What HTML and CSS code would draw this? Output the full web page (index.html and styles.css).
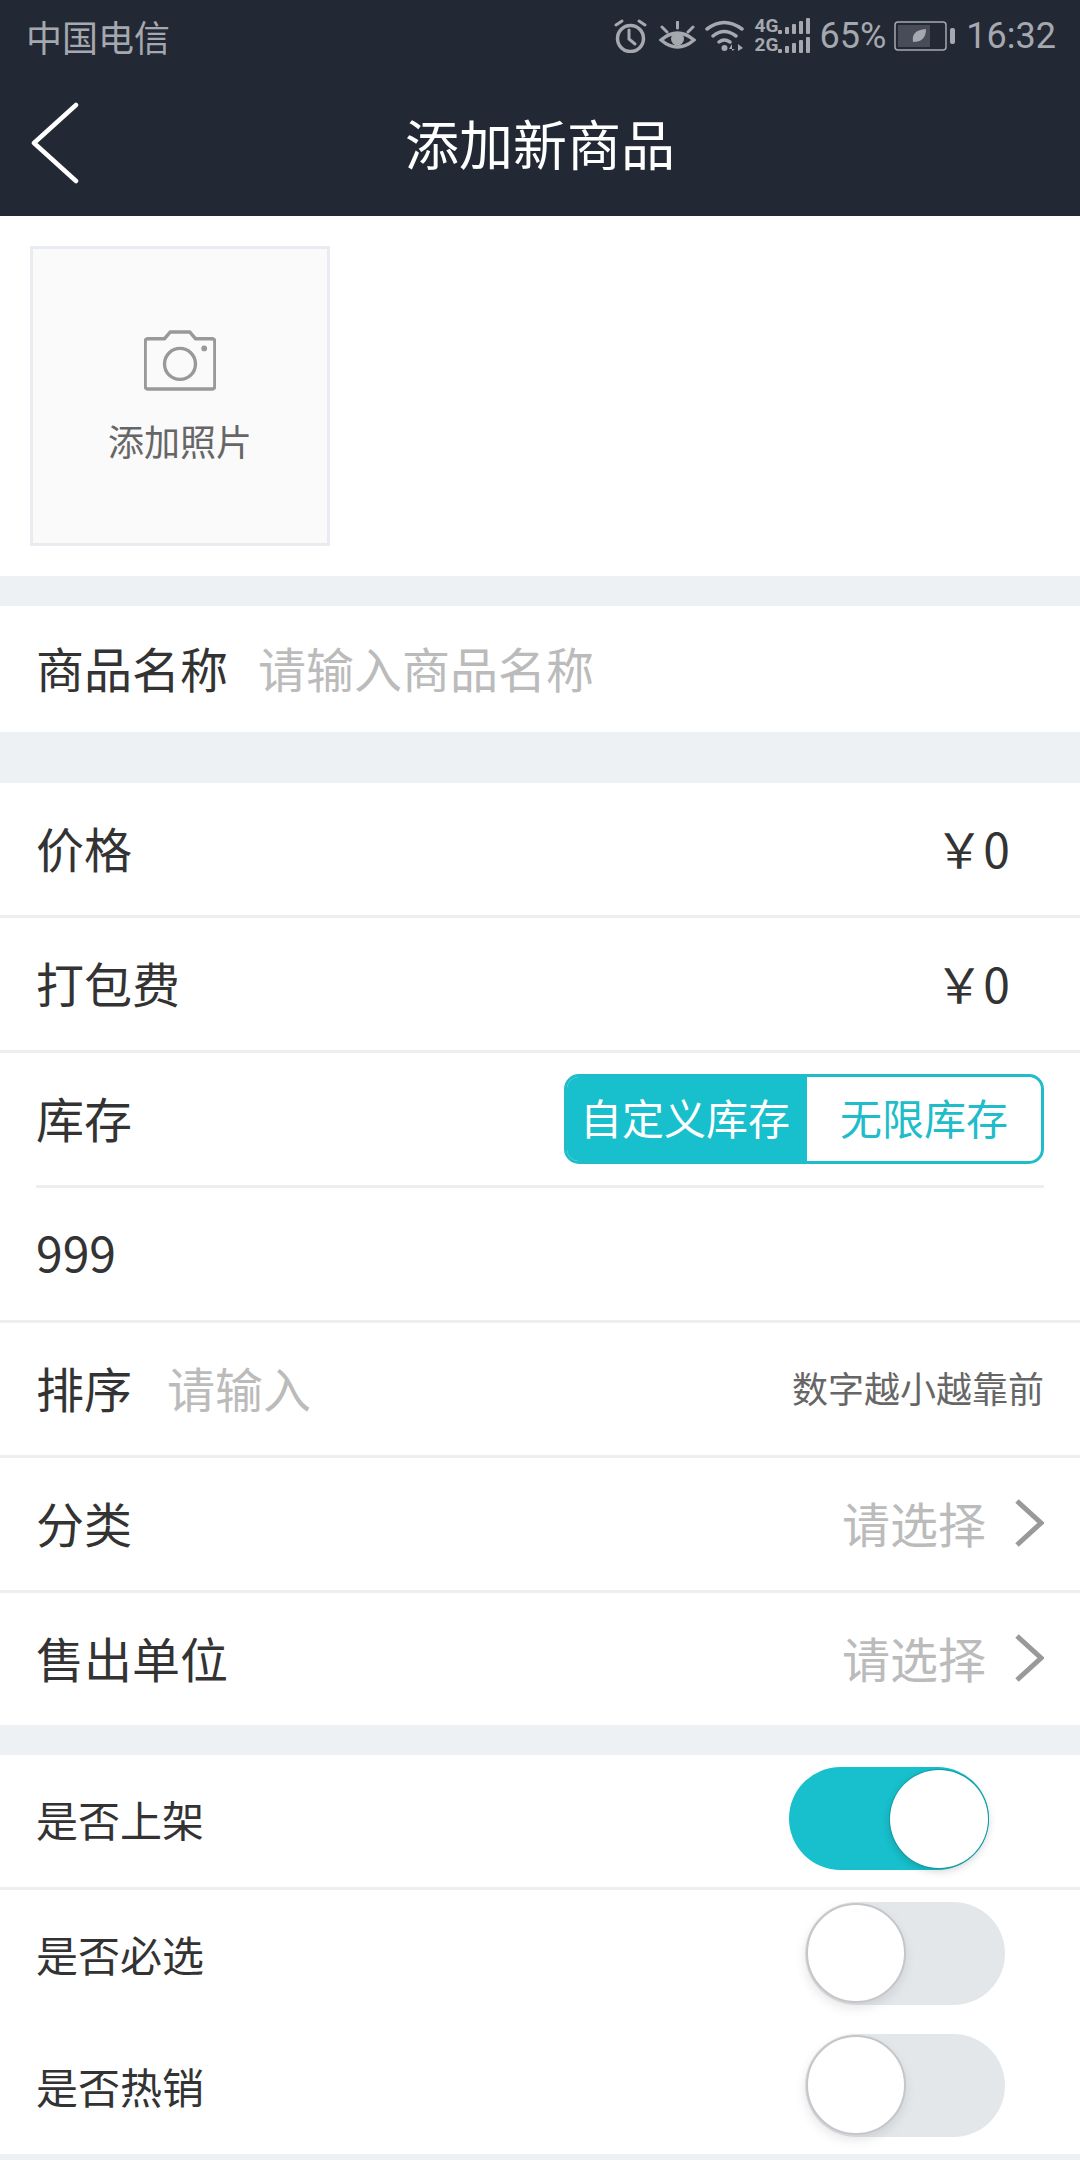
FILE: index.html
```html
<!DOCTYPE html>
<html lang="zh-CN">
<head>
  <meta charset="UTF-8" />
  <title>添加新商品</title>
  <link rel="stylesheet" href="styles.css">
</head>
<body>
  <div class="header">
    <div class="statusbar">
      <span class="carrier">中国电信</span>
      <div class="status-right">
        <svg class="ic-alarm" width="33" height="34" viewBox="0 0 33 34">
          <circle cx="16.5" cy="19.500" r="13" fill="none" stroke="#a5a8ae" stroke-width="3.500"/>
          <path d="M15 11v9l6 5" fill="none" stroke="#a5a8ae" stroke-width="3" stroke-linecap="round"/>
          <path d="M2 6l6-4M31 6l-6-4" fill="none" stroke="#a5a8ae" stroke-width="3" stroke-linecap="round"/>
        </svg>
        <svg class="ic-eye" width="37" height="31" viewBox="0 0 37 31">
          <path d="M2 19Q18.500 5 35 19Q18.500 33 2 19Z" fill="none" stroke="#a5a8ae" stroke-width="3.500"/>
          <circle cx="18.500" cy="18" r="6.500" fill="#a5a8ae"/>
          <path d="M18.500 1v6M3 6l5 5M34 6l-5 5" fill="none" stroke="#a5a8ae" stroke-width="3" stroke-linecap="round"/>
        </svg>
        <svg class="ic-wifi" width="40" height="32" viewBox="0 0 40 32">
          <path d="M2 9Q19-4 37 9M8 16Q19 7 31 16M14 22Q19 18 25 22" fill="none" stroke="#a5a8ae" stroke-width="3.500" stroke-linecap="round"/>
          <circle cx="19.500" cy="28" r="3" fill="#a5a8ae"/>
          <path d="M27 31v-7l-3 5h6M33 24l5 4-5 3z" fill="#a5a8ae"/>
        </svg>
        <div class="signal">
          <div class="signal-line">
            <span class="net">4G</span>
            <i class="b1"></i><i class="b2"></i><i class="b3"></i><i class="b4"></i><i class="b5"></i>
          </div>
          <div class="signal-line">
            <span class="net">2G</span>
            <i class="b1"></i><i class="b2"></i><i class="b3"></i><i class="b4"></i><i class="b5"></i>
          </div>
        </div>
        <span class="pct">65%</span>
        <svg class="ic-batt" width="62" height="30" viewBox="0 0 62 30">
          <rect x="1" y="1" width="51" height="28" rx="3" fill="none" stroke="#a5a8ae" stroke-width="1.500"/>
          <rect x="4" y="4" width="32" height="22" fill="#474c58"/>
          <path d="M19 21Q17 9 32 8Q32 21 19 21Z" fill="#a5a8ae"/>
          <rect x="56" y="7" width="5" height="16" rx="2" fill="#a5a8ae"/>
        </svg>
        <span class="clock">16:32</span>
      </div>
    </div>
    <div class="titlebar">
      <svg class="back" width="50" height="82" viewBox="0 0 50 82">
        <path d="M46 3L4 41l42 38" fill="none" stroke="#fff" stroke-width="4.500" stroke-linecap="round" stroke-linejoin="round"/>
      </svg>
      <h1>添加新商品</h1>
    </div>
  </div>

  <div class="photo-section">
    <div class="photo-box">
      <svg class="camera" width="72" height="61" viewBox="0 0 74 63">
        <path d="M4 9h17l6-7h20l6 7h17a3 3 0 0 1 3 3v46a3 3 0 0 1-3 3H4a3 3 0 0 1-3-3V12a3 3 0 0 1 3-3z" fill="none" stroke="#999" stroke-width="3.500"/>
        <circle cx="37" cy="35" r="16" fill="none" stroke="#999" stroke-width="3.500"/>
        <circle cx="62" cy="19" r="3" fill="#999"/>
      </svg>
      <span class="photo-label">添加照片</span>
    </div>
  </div>

  <div class="gap"></div>
  <div class="row name-row">
    <span class="label">商品名称</span>
    <span class="ph name-ph">请输入商品名称</span>
  </div>
  <div class="gap gap-big"></div>

  <div class="row line">
    <span class="label">价格</span>
    <span class="price">￥0</span>
  </div>
  <div class="row line">
    <span class="label">打包费</span>
    <span class="price">￥0</span>
  </div>

  <div class="stock line">
    <div class="stock-top">
      <span class="label">库存</span>
      <div class="seg">
        <span class="seg-on">自定义库存</span>
        <span class="seg-off">无限库存</span>
      </div>
    </div>
    <div class="stock-val">999</div>
  </div>

  <div class="row line">
    <span class="label">排序</span>
    <span class="ph sort-ph">请输入</span>
    <span class="hint">数字越小越靠前</span>
  </div>
  <div class="row line">
    <span class="label">分类</span>
    <span class="ph pick">请选择</span>
    <svg class="chev" width="30" height="50" viewBox="0 0 30 50"><path d="M3 3l24 22L3 47" fill="none" stroke="#999" stroke-width="5"/></svg>
  </div>
  <div class="row last-row">
    <span class="label">售出单位</span>
    <span class="ph pick">请选择</span>
    <svg class="chev" width="30" height="50" viewBox="0 0 30 50"><path d="M3 3l24 22L3 47" fill="none" stroke="#999" stroke-width="5"/></svg>
  </div>

  <div class="gap"></div>

  <div class="row small line">
    <span class="label-sm">是否上架</span>
    <div class="switch on"><div class="knob"></div></div>
  </div>
  <div class="row small">
    <span class="label-sm">是否必选</span>
    <div class="switch off"><div class="knob"></div></div>
  </div>
  <div class="row small">
    <span class="label-sm">是否热销</span>
    <div class="switch off"><div class="knob"></div></div>
  </div>
  <div class="gap"></div>
</body>
</html>
```

FILE: styles.css
```css
* { box-sizing: border-box; }
html, body { height: 2160px; overflow: hidden; }
body {
  margin: 0;
  background: #fff;
  color: #333;
  font-family: "Noto Sans CJK SC", "Noto Sans", sans-serif;
}

.header { height: 216px; background: #222834; }
.statusbar {
  height: 72px;
  padding: 0 24px 0 26px;
  display: flex;
  justify-content: space-between;
  align-items: center;
  color: #a5a8ae;
}
.carrier { font-size: 36px; line-height: 72px; }
.status-right { display: flex; align-items: center; }
.ic-eye { margin-left: 12px; }
.ic-wifi { margin-left: 9px; }
.signal { margin-left: 10px; width: 57px; }
.signal-line {
  display: flex;
  align-items: flex-end;
  gap: 3px;
  height: 17px;
  margin-bottom: 2px;
}
.signal-line i { display: block; width: 4px; background: #a5a8ae; border-radius: 1px; }
.signal-line .b1 { height: 4px; }
.signal-line .b2 { height: 7px; }
.signal-line .b3 { height: 10px; }
.signal-line .b4 { height: 13px; }
.signal-line .b5 { height: 16px; }
.net {
  width: 20px;
  font: bold 19px/17px "Liberation Sans Narrow", "Roboto", sans-serif;
}
.pct { margin-left: 8px; font: 36px/72px "Roboto", sans-serif; }
.ic-batt { margin-left: 8px; }
.clock { margin-left: 10px; font: 36px/72px "Roboto", sans-serif; }

.titlebar {
  position: relative;
  height: 144px;
  display: flex;
  justify-content: center;
  align-items: center;
  padding-bottom: 3px;
}
.titlebar h1 { margin: 0; font-size: 54px; font-weight: 400; color: #fff; }
.back { position: absolute; left: 30px; top: 30px; }

.photo-section { height: 360px; padding: 30px; }
.photo-box {
  width: 300px;
  height: 300px;
  background: #fafafa;
  border: 3px solid #e8ebef;
  display: flex;
  flex-direction: column;
  align-items: center;
  padding-top: 81px;
}
.photo-label { margin-top: 24px; font-size: 36px; line-height: 50px; color: #666; }

.gap { height: 30px; background: #eef1f4; }
.gap-big { height: 51px; }

.row {
  height: 135px;
  padding: 0 36px 5px;
  display: flex;
  align-items: center;
}
.line { border-bottom: 3px solid #eee; }
.name-row { height: 126px; }
.last-row { height: 132px; }
.label { font-size: 48px; }
.ph { font-size: 48px; color: #bbb; }
.name-ph { margin-left: 30px; }
.sort-ph { margin-left: 35px; }
.price { margin-left: auto; margin-right: 34px; font-size: 48px; }
.hint { margin-left: auto; font-size: 36px; color: #666; }
.pick { margin-left: auto; }
.chev { margin-left: 28px; margin-top: 3px; flex-shrink: 0; }

.stock { padding: 0 36px; height: 270px; }
.stock-top {
  height: 135px;
  display: flex;
  justify-content: space-between;
  align-items: center;
  border-bottom: 3px solid #eee;
}
.stock-top .label { margin-bottom: 5px; }
.seg {
  width: 480px;
  height: 90px;
  display: flex;
  border: 3px solid #1ebdc9;
  border-radius: 15px;
  overflow: hidden;
  font-size: 42px;
  line-height: 80px;
  text-align: center;
}
.seg-on { width: 240px; padding-right: 4px; background: #17c0cc; color: #fff; }
.seg-off { flex: 1; color: #20bcc9; }
.stock-val { font-size: 48px; line-height: 127px; }

.small { height: 132px; }
.row.small.line { height: 135px; }
.label-sm { font-size: 42px; }
.switch {
  position: relative;
  width: 200px;
  height: 103px;
  border-radius: 52px;
}
.switch.on { margin-left: auto; margin-right: 55px; background: #17c0cc; }
.switch.off { margin-left: auto; margin-right: 39px; background: #e4e7ea; }
.knob {
  position: absolute;
  border-radius: 50%;
  background: #fff;
}
.on .knob {
  top: 3px;
  right: 1px;
  width: 98px;
  height: 98px;
  box-shadow: 0 0 0 1px #159aa6, 0 3px 8px rgba(0,0,0,0.18);
}
.off .knob {
  top: 1px;
  left: 1px;
  width: 100px;
  height: 100px;
  border: 2px solid #c4c6ca;
  box-shadow: -1px 5px 12px rgba(0,0,0,0.1);
}
```
